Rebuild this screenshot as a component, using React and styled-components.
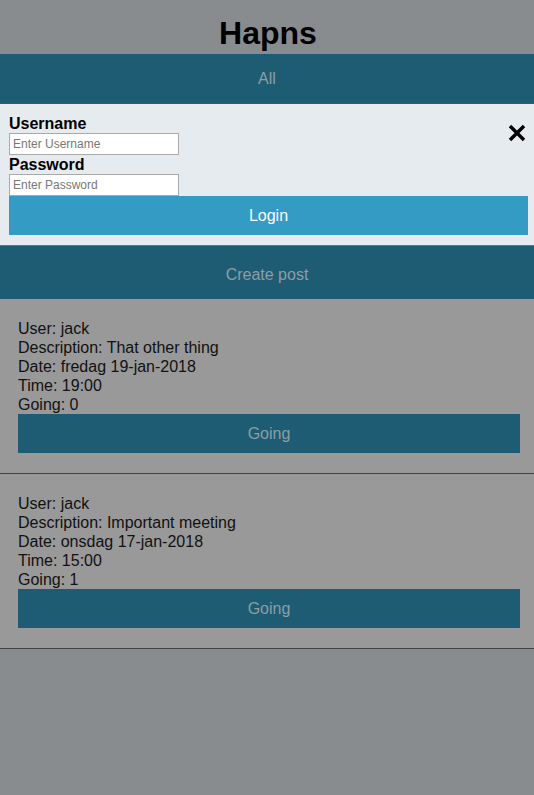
import React from "react";
import styled, { createGlobalStyle } from "styled-components";

const GlobalStyle = createGlobalStyle`
  html, body {
    margin: 0;
    padding: 0;
    background: #898c8f;
    font-family: "Liberation Sans", Arial, sans-serif;
    font-size: 16px;
  }
`;

const Page = styled.div`
  min-height: 795px;
  background: #898c8f;
`;

const Title = styled.h1`
  margin: 0;
  height: 54px;
  display: flex;
  align-items: flex-end;
  justify-content: center;
  font-size: 32px;
  font-weight: bold;
  color: #000;
  line-height: 1;
  padding-bottom: 5px;
  padding-left: 2px;
  box-sizing: border-box;
`;

const BarButton = styled.button`
  display: block;
  width: 100%;
  height: ${(p) => p.h || 49}px;
  border: none;
  margin: 0;
  padding-top: ${(p) => p.pt || 2}px;
  background: #1e5c74;
  color: #8d9ea4;
  font-family: inherit;
  font-size: 16px;
  cursor: pointer;
`;

const LoginPanel = styled.form`
  position: relative;
  display: flex;
  flex-direction: column;
  background: #e6ebef;
  border-top: 1px solid #3a5a68;
  border-bottom: 1px solid #6d6f71;
  padding: 10px 6px 10px 9px;
`;

const Label = styled.label`
  font-weight: bold;
  font-size: 16px;
  line-height: 19px;
  color: #000;
`;

const Input = styled.input`
  width: 170px;
  height: 22px;
  box-sizing: border-box;
  border: 1px solid #a9a9a9;
  background: #fff;
  padding: 0 3px;
  margin: 0;
  font-family: "Liberation Sans", Arial, sans-serif;
  font-size: 12px;
  &::placeholder {
    color: #777;
  }
`;

const LoginButton = styled.button`
  height: 39px;
  border: none;
  background: #339bc4;
  color: #fff;
  font-family: inherit;
  font-size: 16px;
`;

const Close = styled.button`
  position: absolute;
  top: 20px;
  right: 7px;
  width: 20px;
  height: 20px;
  padding: 0;
  border: none;
  background: transparent;
  cursor: pointer;
`;

const Card = styled.div`
  background: #999999;
  border-bottom: 1px solid #444;
  padding: 20px 14px 20px 18px;
  color: #111;
`;

const Line = styled.div`
  line-height: 19px;
  font-size: 16px;
`;

const GoingButton = styled.button`
  display: block;
  width: 100%;
  height: 39px;
  border: none;
  background: #1e5c74;
  color: #8d9ea4;
  font-family: inherit;
  font-size: 16px;
`;

const posts = [
  { user: "jack", description: "That other thing", date: "fredag 19-jan-2018", time: "19:00", going: 0 },
  { user: "jack", description: "Important meeting", date: "onsdag 17-jan-2018", time: "15:00", going: 1 },
];

export default function App() {
  return (
    <Page>
      <GlobalStyle />
      <Title>Hapns</Title>
      <BarButton>All</BarButton>
      <LoginPanel onSubmit={(e) => e.preventDefault()}>
        <Label>Username</Label>
        <Input placeholder="Enter Username" />
        <Label>Password</Label>
        <Input type="password" placeholder="Enter Password" />
        <LoginButton>Login</LoginButton>
        <Close type="button" aria-label="close">
          <svg width="18" height="18" viewBox="0 0 18 18">
            <path d="M2 2 L16 16 M16 2 L2 16" stroke="#000" strokeWidth="3.4" strokeLinecap="butt" />
          </svg>
        </Close>
      </LoginPanel>
      <BarButton h={53} pt={5}>Create post</BarButton>
      {posts.map((p, i) => (
        <Card key={i}>
          <Line>User: {p.user}</Line>
          <Line>Description: {p.description}</Line>
          <Line>Date: {p.date}</Line>
          <Line>Time: {p.time}</Line>
          <Line>Going: {p.going}</Line>
          <GoingButton>Going</GoingButton>
        </Card>
      ))}
    </Page>
  );
}
